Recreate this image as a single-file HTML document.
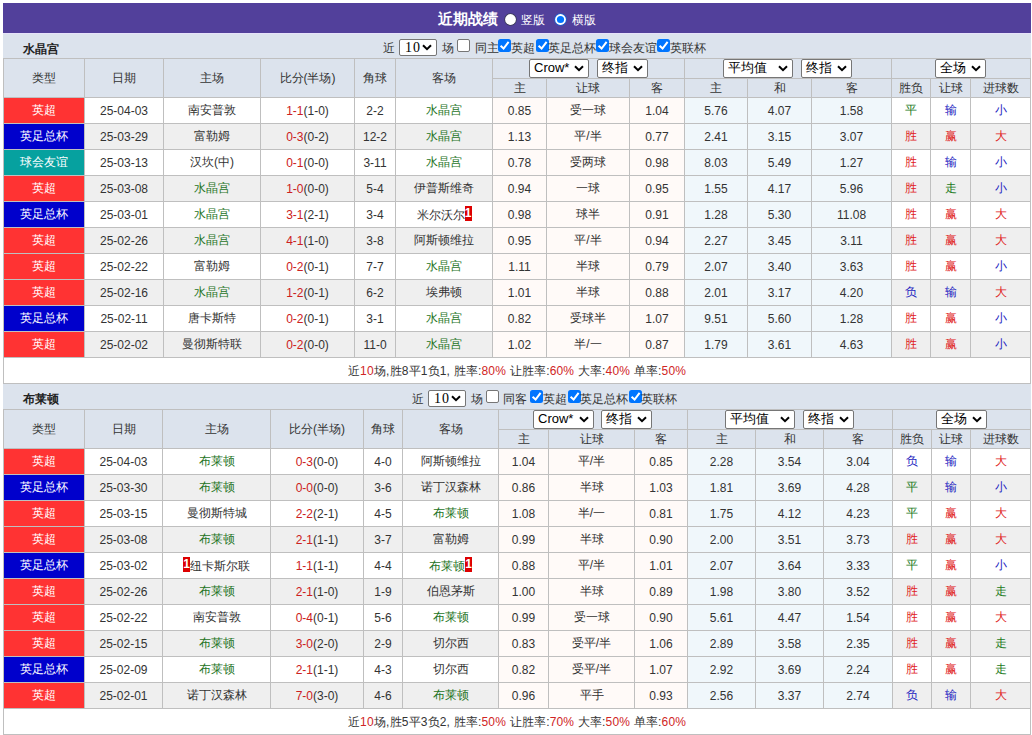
<!DOCTYPE html><html><head><meta charset="utf-8"><style>
*{margin:0;padding:0;box-sizing:border-box}
html,body{width:1032px;height:735px;overflow:hidden;background:#fff}
body{font-family:"Liberation Sans",sans-serif;font-size:12px;color:#333;position:relative}
.bar{position:absolute;left:3px;top:3px;width:1028px;height:30px;background:#52409b;color:#fff}
.bar .tt{position:absolute;left:435px;top:6px;font-size:15px;line-height:20px;font-weight:bold}
.rd{position:absolute;width:13px;height:13px;line-height:0}
.bar .lb{position:absolute;top:9px;font-size:12px;line-height:16px}
.team{position:absolute;left:3px;width:1028px;background:#dce3ed}
.team.t1{border-top:1px solid #e6e2fa}
.tn{position:absolute;font-size:12px;line-height:14px;font-weight:bold;color:#222}
.ct{position:absolute;font-size:12px;line-height:14px;color:#333;white-space:nowrap}
.sel{position:absolute;display:block;border:1px solid #767676;border-radius:2px;background:#fff;color:#000;font-size:13px;line-height:16px;text-align:left;padding-left:4px;white-space:nowrap;z-index:2}
.n10{font-family:'Liberation Serif',serif;font-size:14px;letter-spacing:1px;padding-left:5px}
.crow{padding-left:4px}
.sel .chev{position:absolute;right:4px;top:5px}
.n10 .chev{top:4px}
.cb{position:absolute;width:13px;height:13px;line-height:0}
.cb.off{border:1px solid #767676;border-radius:2px;background:#fff}
table.t{position:absolute;left:3px;border-collapse:collapse;table-layout:fixed;width:1028px}
.t th,.t td{border:1px solid #bfbfbf;text-align:center;font-weight:normal;white-space:nowrap;overflow:hidden}
.t th{background:#dce3ed;color:#333}
.t tr.h1 th{height:20px}
.t tr.h2 th{height:19px}
.t td{height:26px;background:#fff}
.t tr.alt td{background:#efefef}
.t td.ty{color:#fff}
.t td.o1{background:#fffaf8}
.t td.o2{background:#f0f7fb}
.t tr.alt td.o1{background:#fffaf8}
.t tr.alt td.o2{background:#f0f7fb}
.t td.g{color:#1e741e}
.sc{color:#cc2020}
.rc{display:inline-block;background:#dd0000;color:#fff;font-weight:bold;width:7px;text-align:center;line-height:15px;overflow:hidden;vertical-align:-2px}
.sum td{background:#fff;height:26px;padding-top:1px;letter-spacing:0.18px}
.sum em{font-style:normal;color:#d02525}
</style></head><body>
<div class="bar"><span class="tt">近期战绩</span><span class="rd" style="left:501px;top:10px"><svg width="13" height="13" viewBox="0 0 13 13"><circle cx="6.5" cy="6.5" r="6.2" fill="#3a3a55"/><circle cx="6.5" cy="6.5" r="5.4" fill="#fff"/></svg></span><span class="lb" style="left:518px">竖版</span><span class="rd" style="left:551px;top:10px"><svg width="13" height="13" viewBox="0 0 13 13"><circle cx="6.5" cy="6.5" r="6.3" fill="#1f5fcf"/><circle cx="6.5" cy="6.5" r="5.4" fill="#fff"/><circle cx="6.5" cy="6.5" r="3.6" fill="#0075ff"/></svg></span><span class="lb" style="left:569px">横版</span></div>
<div class="team t1" style="top:33px;height:25px"></div>
<span class="tn" style="left:22.5px;top:42px">水晶宫</span>
<span class="ct" style="left:383px;top:41px">近</span>
<span class="sel n10" style="left:399px;top:39px;width:38px;height:17px">10<svg class="chev" width="10" height="7" viewBox="0 0 10 7"><polyline points="1,1.2 5,5.2 9,1.2" fill="none" stroke="#000" stroke-width="2"/></svg></span>
<span class="ct" style="left:441.5px;top:41px">场</span>
<span class="cb off" style="left:457px;top:39px"></span>
<span class="ct" style="left:474.5px;top:41px">同主</span>
<span class="cb" style="left:498px;top:39px"><svg width="13" height="13" viewBox="0 0 13 13"><rect x="0" y="0" width="13" height="13" rx="2.5" fill="#0075ff"/><polyline points="2.6,6.8 5.6,9.6 10.6,2.8" fill="none" stroke="#fff" stroke-width="2"/></svg></span>
<span class="ct" style="left:511px;top:41px">英超</span>
<span class="cb" style="left:535.5px;top:39px"><svg width="13" height="13" viewBox="0 0 13 13"><rect x="0" y="0" width="13" height="13" rx="2.5" fill="#0075ff"/><polyline points="2.6,6.8 5.6,9.6 10.6,2.8" fill="none" stroke="#fff" stroke-width="2"/></svg></span>
<span class="ct" style="left:547.5px;top:41px">英足总杯</span>
<span class="cb" style="left:596px;top:39px"><svg width="13" height="13" viewBox="0 0 13 13"><rect x="0" y="0" width="13" height="13" rx="2.5" fill="#0075ff"/><polyline points="2.6,6.8 5.6,9.6 10.6,2.8" fill="none" stroke="#fff" stroke-width="2"/></svg></span>
<span class="ct" style="left:609px;top:41px">球会友谊</span>
<span class="cb" style="left:657px;top:39px"><svg width="13" height="13" viewBox="0 0 13 13"><rect x="0" y="0" width="13" height="13" rx="2.5" fill="#0075ff"/><polyline points="2.6,6.8 5.6,9.6 10.6,2.8" fill="none" stroke="#fff" stroke-width="2"/></svg></span>
<span class="ct" style="left:670px;top:41px">英联杯</span>
<span class="sel crow" style="left:529px;top:59px;width:60px;height:19px">Crow*<svg class="chev" width="10" height="7" viewBox="0 0 10 7"><polyline points="1,1.2 5,5.2 9,1.2" fill="none" stroke="#000" stroke-width="2"/></svg></span>
<span class="sel " style="left:597px;top:59px;width:51px;height:19px">终指<svg class="chev" width="10" height="7" viewBox="0 0 10 7"><polyline points="1,1.2 5,5.2 9,1.2" fill="none" stroke="#000" stroke-width="2"/></svg></span>
<span class="sel " style="left:723px;top:59px;width:70px;height:19px">平均值<svg class="chev" width="10" height="7" viewBox="0 0 10 7"><polyline points="1,1.2 5,5.2 9,1.2" fill="none" stroke="#000" stroke-width="2"/></svg></span>
<span class="sel " style="left:801px;top:59px;width:51px;height:19px">终指<svg class="chev" width="10" height="7" viewBox="0 0 10 7"><polyline points="1,1.2 5,5.2 9,1.2" fill="none" stroke="#000" stroke-width="2"/></svg></span>
<span class="sel " style="left:935px;top:59px;width:51px;height:19px">全场<svg class="chev" width="10" height="7" viewBox="0 0 10 7"><polyline points="1,1.2 5,5.2 9,1.2" fill="none" stroke="#000" stroke-width="2"/></svg></span>
<table class="t" style="top:58px">
<colgroup><col style="width:81px"><col style="width:79px"><col style="width:97px"><col style="width:94px"><col style="width:41px"><col style="width:97px"><col style="width:54px"><col style="width:83px"><col style="width:55px"><col style="width:63px"><col style="width:64px"><col style="width:80px"><col style="width:39px"><col style="width:40px"><col style="width:60px"></colgroup>
<tr class="h1"><th rowspan=2>类型</th><th rowspan=2>日期</th><th rowspan=2>主场</th><th rowspan=2>比分(半场)</th><th rowspan=2>角球</th><th rowspan=2>客场</th>
<th colspan=3></th><th colspan=3></th><th colspan=3></th></tr>
<tr class="h2"><th>主</th><th>让球</th><th>客</th><th>主</th><th>和</th><th>客</th><th>胜负</th><th>让球</th><th>进球数</th></tr>
<tr>
<td class="ty" style="background:#ff3333">英超</td>
<td>25-04-03</td>
<td>南安普敦</td>
<td><span class="sc">1-1</span>(1-0)</td>
<td>2-2</td>
<td class="g">水晶宫</td>
<td class="o1">0.85</td>
<td class="o1">受一球</td>
<td class="o1">1.04</td>
<td class="o2">5.76</td>
<td class="o2">4.07</td>
<td class="o2">1.58</td>
<td class="rs" style="color:#1a7a1a">平</td>
<td class="rs" style="color:#1c1cc0">输</td>
<td class="rs" style="color:#1c1cc0">小</td>
</tr>
<tr class="alt">
<td class="ty" style="background:#0000cc">英足总杯</td>
<td>25-03-29</td>
<td>富勒姆</td>
<td><span class="sc">0-3</span>(0-2)</td>
<td>12-2</td>
<td class="g">水晶宫</td>
<td class="o1">1.13</td>
<td class="o1">平/半</td>
<td class="o1">0.77</td>
<td class="o2">2.41</td>
<td class="o2">3.15</td>
<td class="o2">3.07</td>
<td class="rs" style="color:#e02020">胜</td>
<td class="rs" style="color:#e02020">赢</td>
<td class="rs" style="color:#e02020">大</td>
</tr>
<tr>
<td class="ty" style="background:#06a19f">球会友谊</td>
<td>25-03-13</td>
<td>汉坎(中)</td>
<td><span class="sc">0-1</span>(0-0)</td>
<td>3-11</td>
<td class="g">水晶宫</td>
<td class="o1">0.78</td>
<td class="o1">受两球</td>
<td class="o1">0.98</td>
<td class="o2">8.03</td>
<td class="o2">5.49</td>
<td class="o2">1.27</td>
<td class="rs" style="color:#e02020">胜</td>
<td class="rs" style="color:#1c1cc0">输</td>
<td class="rs" style="color:#1c1cc0">小</td>
</tr>
<tr class="alt">
<td class="ty" style="background:#ff3333">英超</td>
<td>25-03-08</td>
<td class="g">水晶宫</td>
<td><span class="sc">1-0</span>(0-0)</td>
<td>5-4</td>
<td>伊普斯维奇</td>
<td class="o1">0.94</td>
<td class="o1">一球</td>
<td class="o1">0.95</td>
<td class="o2">1.55</td>
<td class="o2">4.17</td>
<td class="o2">5.96</td>
<td class="rs" style="color:#e02020">胜</td>
<td class="rs" style="color:#1a7a1a">走</td>
<td class="rs" style="color:#1c1cc0">小</td>
</tr>
<tr>
<td class="ty" style="background:#0000cc">英足总杯</td>
<td>25-03-01</td>
<td class="g">水晶宫</td>
<td><span class="sc">3-1</span>(2-1)</td>
<td>3-4</td>
<td>米尔沃尔<span class="rc">1</span></td>
<td class="o1">0.98</td>
<td class="o1">球半</td>
<td class="o1">0.91</td>
<td class="o2">1.28</td>
<td class="o2">5.30</td>
<td class="o2">11.08</td>
<td class="rs" style="color:#e02020">胜</td>
<td class="rs" style="color:#e02020">赢</td>
<td class="rs" style="color:#e02020">大</td>
</tr>
<tr class="alt">
<td class="ty" style="background:#ff3333">英超</td>
<td>25-02-26</td>
<td class="g">水晶宫</td>
<td><span class="sc">4-1</span>(1-0)</td>
<td>3-8</td>
<td>阿斯顿维拉</td>
<td class="o1">0.95</td>
<td class="o1">平/半</td>
<td class="o1">0.94</td>
<td class="o2">2.27</td>
<td class="o2">3.45</td>
<td class="o2">3.11</td>
<td class="rs" style="color:#e02020">胜</td>
<td class="rs" style="color:#e02020">赢</td>
<td class="rs" style="color:#e02020">大</td>
</tr>
<tr>
<td class="ty" style="background:#ff3333">英超</td>
<td>25-02-22</td>
<td>富勒姆</td>
<td><span class="sc">0-2</span>(0-1)</td>
<td>7-7</td>
<td class="g">水晶宫</td>
<td class="o1">1.11</td>
<td class="o1">半球</td>
<td class="o1">0.79</td>
<td class="o2">2.07</td>
<td class="o2">3.40</td>
<td class="o2">3.63</td>
<td class="rs" style="color:#e02020">胜</td>
<td class="rs" style="color:#e02020">赢</td>
<td class="rs" style="color:#1c1cc0">小</td>
</tr>
<tr class="alt">
<td class="ty" style="background:#ff3333">英超</td>
<td>25-02-16</td>
<td class="g">水晶宫</td>
<td><span class="sc">1-2</span>(0-1)</td>
<td>6-2</td>
<td>埃弗顿</td>
<td class="o1">1.01</td>
<td class="o1">半球</td>
<td class="o1">0.88</td>
<td class="o2">2.01</td>
<td class="o2">3.17</td>
<td class="o2">4.20</td>
<td class="rs" style="color:#1c1cc0">负</td>
<td class="rs" style="color:#1c1cc0">输</td>
<td class="rs" style="color:#e02020">大</td>
</tr>
<tr>
<td class="ty" style="background:#0000cc">英足总杯</td>
<td>25-02-11</td>
<td>唐卡斯特</td>
<td><span class="sc">0-2</span>(0-1)</td>
<td>3-1</td>
<td class="g">水晶宫</td>
<td class="o1">0.82</td>
<td class="o1">受球半</td>
<td class="o1">1.07</td>
<td class="o2">9.51</td>
<td class="o2">5.60</td>
<td class="o2">1.28</td>
<td class="rs" style="color:#e02020">胜</td>
<td class="rs" style="color:#e02020">赢</td>
<td class="rs" style="color:#1c1cc0">小</td>
</tr>
<tr class="alt">
<td class="ty" style="background:#ff3333">英超</td>
<td>25-02-02</td>
<td>曼彻斯特联</td>
<td><span class="sc">0-2</span>(0-0)</td>
<td>11-0</td>
<td class="g">水晶宫</td>
<td class="o1">1.02</td>
<td class="o1">半/一</td>
<td class="o1">0.87</td>
<td class="o2">1.79</td>
<td class="o2">3.61</td>
<td class="o2">4.63</td>
<td class="rs" style="color:#e02020">胜</td>
<td class="rs" style="color:#e02020">赢</td>
<td class="rs" style="color:#1c1cc0">小</td>
</tr>
<tr class="sum"><td colspan=15>近<em>10</em>场,胜8平1负1, 胜率:<em>80%</em> 让胜率:<em>60%</em> 大率:<em>40%</em> 单率:<em>50%</em></td></tr>
</table>
<div class="team t2" style="top:384px;height:25px"></div>
<span class="tn" style="left:22.5px;top:392px">布莱顿</span>
<span class="ct" style="left:411.5px;top:392px">近</span>
<span class="sel n10" style="left:428px;top:390px;width:38px;height:17px">10<svg class="chev" width="10" height="7" viewBox="0 0 10 7"><polyline points="1,1.2 5,5.2 9,1.2" fill="none" stroke="#000" stroke-width="2"/></svg></span>
<span class="ct" style="left:470.5px;top:392px">场</span>
<span class="cb off" style="left:486px;top:390px"></span>
<span class="ct" style="left:503px;top:392px">同客</span>
<span class="cb" style="left:530px;top:390px"><svg width="13" height="13" viewBox="0 0 13 13"><rect x="0" y="0" width="13" height="13" rx="2.5" fill="#0075ff"/><polyline points="2.6,6.8 5.6,9.6 10.6,2.8" fill="none" stroke="#fff" stroke-width="2"/></svg></span>
<span class="ct" style="left:542.5px;top:392px">英超</span>
<span class="cb" style="left:567.5px;top:390px"><svg width="13" height="13" viewBox="0 0 13 13"><rect x="0" y="0" width="13" height="13" rx="2.5" fill="#0075ff"/><polyline points="2.6,6.8 5.6,9.6 10.6,2.8" fill="none" stroke="#fff" stroke-width="2"/></svg></span>
<span class="ct" style="left:580px;top:392px">英足总杯</span>
<span class="cb" style="left:628.5px;top:390px"><svg width="13" height="13" viewBox="0 0 13 13"><rect x="0" y="0" width="13" height="13" rx="2.5" fill="#0075ff"/><polyline points="2.6,6.8 5.6,9.6 10.6,2.8" fill="none" stroke="#fff" stroke-width="2"/></svg></span>
<span class="ct" style="left:641px;top:392px">英联杯</span>
<span class="sel crow" style="left:533px;top:410px;width:61px;height:19px">Crow*<svg class="chev" width="10" height="7" viewBox="0 0 10 7"><polyline points="1,1.2 5,5.2 9,1.2" fill="none" stroke="#000" stroke-width="2"/></svg></span>
<span class="sel " style="left:601px;top:410px;width:51px;height:19px">终指<svg class="chev" width="10" height="7" viewBox="0 0 10 7"><polyline points="1,1.2 5,5.2 9,1.2" fill="none" stroke="#000" stroke-width="2"/></svg></span>
<span class="sel " style="left:725px;top:410px;width:70px;height:19px">平均值<svg class="chev" width="10" height="7" viewBox="0 0 10 7"><polyline points="1,1.2 5,5.2 9,1.2" fill="none" stroke="#000" stroke-width="2"/></svg></span>
<span class="sel " style="left:803px;top:410px;width:51px;height:19px">终指<svg class="chev" width="10" height="7" viewBox="0 0 10 7"><polyline points="1,1.2 5,5.2 9,1.2" fill="none" stroke="#000" stroke-width="2"/></svg></span>
<span class="sel " style="left:936px;top:410px;width:51px;height:19px">全场<svg class="chev" width="10" height="7" viewBox="0 0 10 7"><polyline points="1,1.2 5,5.2 9,1.2" fill="none" stroke="#000" stroke-width="2"/></svg></span>
<table class="t" style="top:409px">
<colgroup><col style="width:81px"><col style="width:78px"><col style="width:108px"><col style="width:93px"><col style="width:39px"><col style="width:96px"><col style="width:50px"><col style="width:86px"><col style="width:53px"><col style="width:68px"><col style="width:68px"><col style="width:69px"><col style="width:39px"><col style="width:39px"><col style="width:60px"></colgroup>
<tr class="h1"><th rowspan=2>类型</th><th rowspan=2>日期</th><th rowspan=2>主场</th><th rowspan=2>比分(半场)</th><th rowspan=2>角球</th><th rowspan=2>客场</th>
<th colspan=3></th><th colspan=3></th><th colspan=3></th></tr>
<tr class="h2"><th>主</th><th>让球</th><th>客</th><th>主</th><th>和</th><th>客</th><th>胜负</th><th>让球</th><th>进球数</th></tr>
<tr>
<td class="ty" style="background:#ff3333">英超</td>
<td>25-04-03</td>
<td class="g">布莱顿</td>
<td><span class="sc">0-3</span>(0-0)</td>
<td>4-0</td>
<td>阿斯顿维拉</td>
<td class="o1">1.04</td>
<td class="o1">平/半</td>
<td class="o1">0.85</td>
<td class="o2">2.28</td>
<td class="o2">3.54</td>
<td class="o2">3.04</td>
<td class="rs" style="color:#1c1cc0">负</td>
<td class="rs" style="color:#1c1cc0">输</td>
<td class="rs" style="color:#e02020">大</td>
</tr>
<tr class="alt">
<td class="ty" style="background:#0000cc">英足总杯</td>
<td>25-03-30</td>
<td class="g">布莱顿</td>
<td><span class="sc">0-0</span>(0-0)</td>
<td>3-6</td>
<td>诺丁汉森林</td>
<td class="o1">0.86</td>
<td class="o1">半球</td>
<td class="o1">1.03</td>
<td class="o2">1.81</td>
<td class="o2">3.69</td>
<td class="o2">4.28</td>
<td class="rs" style="color:#1a7a1a">平</td>
<td class="rs" style="color:#1c1cc0">输</td>
<td class="rs" style="color:#1c1cc0">小</td>
</tr>
<tr>
<td class="ty" style="background:#ff3333">英超</td>
<td>25-03-15</td>
<td>曼彻斯特城</td>
<td><span class="sc">2-2</span>(2-1)</td>
<td>4-5</td>
<td class="g">布莱顿</td>
<td class="o1">1.08</td>
<td class="o1">半/一</td>
<td class="o1">0.81</td>
<td class="o2">1.75</td>
<td class="o2">4.12</td>
<td class="o2">4.23</td>
<td class="rs" style="color:#1a7a1a">平</td>
<td class="rs" style="color:#e02020">赢</td>
<td class="rs" style="color:#e02020">大</td>
</tr>
<tr class="alt">
<td class="ty" style="background:#ff3333">英超</td>
<td>25-03-08</td>
<td class="g">布莱顿</td>
<td><span class="sc">2-1</span>(1-1)</td>
<td>3-7</td>
<td>富勒姆</td>
<td class="o1">0.99</td>
<td class="o1">半球</td>
<td class="o1">0.90</td>
<td class="o2">2.00</td>
<td class="o2">3.51</td>
<td class="o2">3.73</td>
<td class="rs" style="color:#e02020">胜</td>
<td class="rs" style="color:#e02020">赢</td>
<td class="rs" style="color:#e02020">大</td>
</tr>
<tr>
<td class="ty" style="background:#0000cc">英足总杯</td>
<td>25-03-02</td>
<td><span class="rc">1</span>纽卡斯尔联</td>
<td><span class="sc">1-1</span>(1-1)</td>
<td>4-4</td>
<td class="g">布莱顿<span class="rc">1</span></td>
<td class="o1">0.88</td>
<td class="o1">平/半</td>
<td class="o1">1.01</td>
<td class="o2">2.07</td>
<td class="o2">3.64</td>
<td class="o2">3.33</td>
<td class="rs" style="color:#1a7a1a">平</td>
<td class="rs" style="color:#e02020">赢</td>
<td class="rs" style="color:#1c1cc0">小</td>
</tr>
<tr class="alt">
<td class="ty" style="background:#ff3333">英超</td>
<td>25-02-26</td>
<td class="g">布莱顿</td>
<td><span class="sc">2-1</span>(1-0)</td>
<td>1-9</td>
<td>伯恩茅斯</td>
<td class="o1">1.00</td>
<td class="o1">半球</td>
<td class="o1">0.89</td>
<td class="o2">1.98</td>
<td class="o2">3.80</td>
<td class="o2">3.52</td>
<td class="rs" style="color:#e02020">胜</td>
<td class="rs" style="color:#e02020">赢</td>
<td class="rs" style="color:#1a7a1a">走</td>
</tr>
<tr>
<td class="ty" style="background:#ff3333">英超</td>
<td>25-02-22</td>
<td>南安普敦</td>
<td><span class="sc">0-4</span>(0-1)</td>
<td>5-6</td>
<td class="g">布莱顿</td>
<td class="o1">0.99</td>
<td class="o1">受一球</td>
<td class="o1">0.90</td>
<td class="o2">5.61</td>
<td class="o2">4.47</td>
<td class="o2">1.54</td>
<td class="rs" style="color:#e02020">胜</td>
<td class="rs" style="color:#e02020">赢</td>
<td class="rs" style="color:#e02020">大</td>
</tr>
<tr class="alt">
<td class="ty" style="background:#ff3333">英超</td>
<td>25-02-15</td>
<td class="g">布莱顿</td>
<td><span class="sc">3-0</span>(2-0)</td>
<td>2-9</td>
<td>切尔西</td>
<td class="o1">0.83</td>
<td class="o1">受平/半</td>
<td class="o1">1.06</td>
<td class="o2">2.89</td>
<td class="o2">3.58</td>
<td class="o2">2.35</td>
<td class="rs" style="color:#e02020">胜</td>
<td class="rs" style="color:#e02020">赢</td>
<td class="rs" style="color:#1a7a1a">走</td>
</tr>
<tr>
<td class="ty" style="background:#0000cc">英足总杯</td>
<td>25-02-09</td>
<td class="g">布莱顿</td>
<td><span class="sc">2-1</span>(1-1)</td>
<td>4-3</td>
<td>切尔西</td>
<td class="o1">0.82</td>
<td class="o1">受平/半</td>
<td class="o1">1.07</td>
<td class="o2">2.92</td>
<td class="o2">3.69</td>
<td class="o2">2.24</td>
<td class="rs" style="color:#e02020">胜</td>
<td class="rs" style="color:#e02020">赢</td>
<td class="rs" style="color:#1a7a1a">走</td>
</tr>
<tr class="alt">
<td class="ty" style="background:#ff3333">英超</td>
<td>25-02-01</td>
<td>诺丁汉森林</td>
<td><span class="sc">7-0</span>(3-0)</td>
<td>4-6</td>
<td class="g">布莱顿</td>
<td class="o1">0.96</td>
<td class="o1">平手</td>
<td class="o1">0.93</td>
<td class="o2">2.56</td>
<td class="o2">3.37</td>
<td class="o2">2.74</td>
<td class="rs" style="color:#1c1cc0">负</td>
<td class="rs" style="color:#1c1cc0">输</td>
<td class="rs" style="color:#e02020">大</td>
</tr>
<tr class="sum"><td colspan=15>近<em>10</em>场,胜5平3负2, 胜率:<em>50%</em> 让胜率:<em>70%</em> 大率:<em>50%</em> 单率:<em>60%</em></td></tr>
</table>
</body></html>
